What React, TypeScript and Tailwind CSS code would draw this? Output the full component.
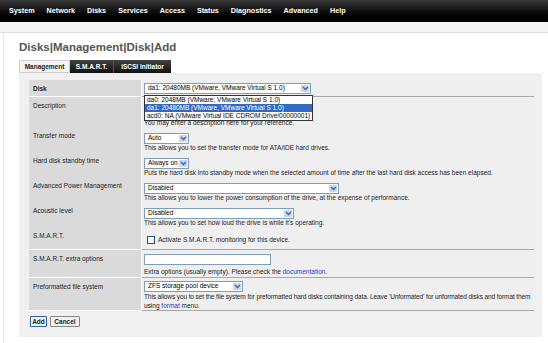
import React from 'react'

const menu = ['System', 'Network', 'Disks', 'Services', 'Access', 'Status', 'Diagnostics', 'Advanced', 'Help']

const Arrow = () => (
  <svg width="7" height="5" viewBox="0 0 7 5">
    <path d="M1 1 L3.5 3.5 L6 1" fill="none" stroke="#4d6185" strokeWidth="1.4" />
  </svg>
)

const Select = ({ value, w }: { value: string; w: string }) => (
  <div className={`flex h-[11px] items-center border border-[#7f9db9] bg-white ${w}`}>
    <span className="flex-1 overflow-hidden whitespace-nowrap pl-[3px] text-[6.5px] leading-none text-black">{value}</span>
    <span className="flex h-full w-[10px] shrink-0 items-center justify-center border border-white bg-[#c6d6f7]">
      <Arrow />
    </span>
  </div>
)

const Row = ({ label, bold, children, h }: { label: string; bold?: boolean; children: React.ReactNode; h: string }) => (
  <div className={`grid grid-cols-[112px_1fr] ${h}`}>
    <div className={`border-b border-white bg-[#dadada] pl-[4px] pt-[5px] text-[6.5px] leading-[8px] text-[#222] ${bold ? 'font-bold' : ''}`}>
      {label}
    </div>
    <div className="border-b border-[#a9a9a9] border-l border-l-white bg-[#efefef] pl-[2px] pt-[3px] text-[6.5px] leading-[8.5px] text-[#222]">
      {children}
    </div>
  </div>
)

export default function App() {
  return (
    <div className="h-[343px] w-[548px] overflow-hidden bg-white font-['Liberation_Sans',sans-serif]">
      <div className="flex h-[22px] items-center gap-[12px] bg-gradient-to-b from-[#3a3a3a] to-[#000] pl-[9px] text-[7.2px] font-bold text-white">
        {menu.map((m) => (
          <span key={m}>{m}</span>
        ))}
      </div>
      <div className="h-[11px] border-b border-[#dedede] bg-[#f4f4f4]" />
      <div className="ml-[3px] h-full border-l border-[#e4e4e4] pl-[15px]">
        <div className="pt-[7px] text-[11.5px] font-bold leading-[14px] text-[#555]">
          Disks|Management|Disk|Add
        </div>
        <div className="mt-[6px] flex h-[13px] text-[6.5px] font-bold">
          <div className="flex w-[51px] items-center justify-center border border-[#ccc] bg-[#f4f4f4] text-[#222]">Management</div>
          <div className="flex w-[43px] items-center justify-center bg-gradient-to-b from-[#444] to-[#111] text-white">S.M.A.R.T.</div>
          <div className="flex w-[58px] items-center justify-center border-l border-[#555] bg-gradient-to-b from-[#444] to-[#111] text-white">iSCSI Initiator</div>
        </div>
        <div className="mr-[6px] h-[264px] bg-[#f0f0f0] pl-[10px] pr-[8px] pt-[7px]">
          <Row label="Disk" bold h="h-[17px]">
            <div className="relative">
              <Select value="da1: 20480MB (VMware, VMware Virtual S 1.0)" w="w-[167px]" />
              <div className="absolute left-0 top-[12px] z-10 w-max min-w-[162px] border border-[#333] bg-white text-[6.5px] leading-[8px] text-black">
                <div className="whitespace-nowrap pl-[2px] pr-[2px]">da0: 2048MB (VMware, VMware Virtual S 1.0)</div>
                <div className="whitespace-nowrap bg-[#316ac5] pl-[2px] pr-[2px] text-white">da1: 20480MB (VMware, VMware Virtual S 1.0)</div>
                <div className="whitespace-nowrap pl-[2px] pr-[2px]">acd0: NA (VMware Virtual IDE CDROM Drive/00000001)</div>
              </div>
            </div>
          </Row>
          <Row label="Description" h="h-[30px]">
            <div className="mt-[1px] h-[11px] w-[150px] border border-[#7f9db9] bg-white" />
            <div className="mt-[7px]">You may enter a description here for your reference.</div>
          </Row>
          <Row label="Transfer mode" h="h-[25px]">
            <div className="mt-[3px]"><Select value="Auto" w="w-[45px]" /></div>
            <div>This allows you to set the transfer mode for ATA/IDE hard drives.</div>
          </Row>
          <Row label="Hard disk standby time" h="h-[25px]">
            <div className="mt-[3px]"><Select value="Always on" w="w-[45px]" /></div>
            <div>Puts the hard disk into standby mode when the selected amount of time after the last hard disk access has been elapsed.</div>
          </Row>
          <Row label="Advanced Power Management" h="h-[25px]">
            <div className="mt-[3px]"><Select value="Disabled" w="w-[195px]" /></div>
            <div>This allows you to lower the power consumption of the drive, at the expense of performance.</div>
          </Row>
          <Row label="Acoustic level" h="h-[25px]">
            <div className="mt-[3px]"><Select value="Disabled" w="w-[150px]" /></div>
            <div>This allows you to set how loud the drive is while it's operating.</div>
          </Row>
          <Row label="S.M.A.R.T." h="h-[23px]">
            <div className="mt-[6px] flex items-center gap-[3px] pl-[3px]">
              <span className="h-[8px] w-[8px] border border-[#1c5180] bg-white" />
              <span>Activate S.M.A.R.T. monitoring for this device.</span>
            </div>
          </Row>
          <Row label="S.M.A.R.T. extra options" h="h-[28px]">
            <div className="mt-[1px] h-[11px] w-[127px] border border-[#7f9db9] bg-white" />
            <div className="mt-[3px]">
              Extra options (usually empty). Please check the <span className="text-[#3333cc]">documentation</span>.
            </div>
          </Row>
          <Row label="Preformatted file system" h="h-[32px]">
            <Select value="ZFS storage pool device" w="w-[99px]" />
            <div className="mt-[1px]">
              <div className="whitespace-nowrap tracking-[-0.1px]">
                This allows you to set the file system for preformatted hard disks containing data. Leave 'Unformated' for unformated disks and format them
              </div>
              <div>
                using <span className="text-[#3333cc]">format</span> menu.
              </div>
            </div>
          </Row>
          <div className="mt-[6px] flex gap-[3px] pl-[1px] text-[6.5px] font-bold text-[#222]">
            <div className="flex h-[11px] w-[17px] items-center justify-center rounded-[1px] border border-[#2f5aa8] bg-[#f2f2f2]">Add</div>
            <div className="flex h-[11px] w-[30px] items-center justify-center rounded-[1px] border border-[#888] bg-[#f2f2f2]">Cancel</div>
          </div>
        </div>
      </div>
    </div>
  )
}
